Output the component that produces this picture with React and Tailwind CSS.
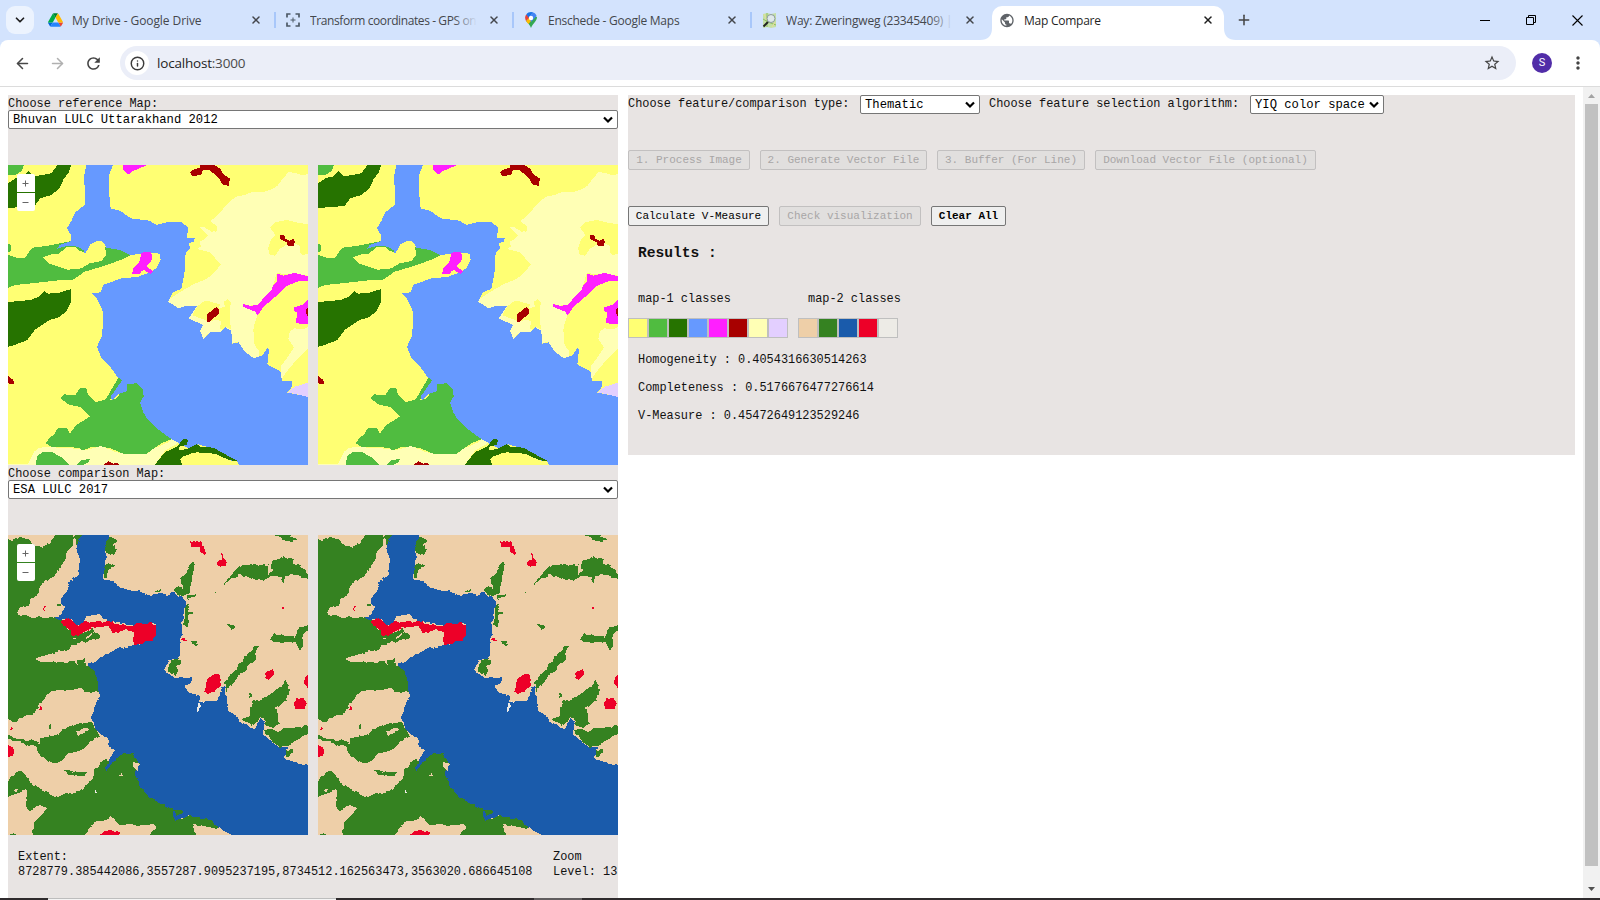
import React from "react";
import { ChevronDown, X, Plus, ArrowLeft, ArrowRight, Info } from "lucide-react";
import { MdRefresh, MdMoreVert, MdStarBorder, MdPublic } from "react-icons/md";

const MONO = "font-['Liberation_Mono','DejaVu_Sans_Mono',monospace]";

/* Thematic land-use raster, drawn on a 900 x 900 grid */
function BhuvanMap() {
  return (
    <svg viewBox="0 0 900 900" className="block h-[300px] w-[300px]" shapeRendering="crispEdges">
      <rect width="900" height="900" fill="#ffff73" />
      <g fill="#ffffb5">
        <path d="M900,27 L885,32 L865,25 L842,21 L825,40 L808,63 L790,73 L765,81 L735,80 L710,90 L683,95 L660,115 L640,138 L625,155 L607,168 L628,185 L623,200 L605,194 L590,185 L576,187 L600,210 L590,222 L576,230 L578,245 L568,252 L588,257 L605,262 L622,280 L638,299 L620,322 L596,342 L560,356 L530,373 L510,385 L484,402 L480,414 L512,430 L545,424 L566,424 L542,460 L585,480 L576,498 L584,525 L600,506 L640,500 L653,487 L665,495 L672,536 L690,530 L710,560 L738,580 L752,575 L756,557 L740,535 L736,495 L742,470 L749,449 L741,440 L706,425 L708,417 L725,422 L748,420 L790,380 L806,325 L860,327 L900,332 Z" />
        <path d="M0,898 L60,897 L78,860 L95,848 L120,846 L220,852 L235,855 L280,843 L320,860 L350,867 L415,868 L435,852 L480,832 L490,820 L530,824 L500,840 L470,858 L440,900 L0,900 Z" />
      </g>
      <g fill="#ffff73">
        <path d="M607,168 L628,185 L626,198 L610,200 L590,187 L576,183 L560,190 L600,210 L590,222 L576,230 L540,235 L540,180 Z" />
        <path d="M786,188 L800,172 L835,165 L870,173 L900,178 L900,265 L885,272 L874,262 L878,245 L855,232 L835,240 L815,252 L802,272 L785,270 L780,250 L788,226 L803,210 Z" />
        <path d="M568,424 L585,410 L600,408 L636,418 L633,430 L650,425 L648,410 L660,402 L668,412 L666,445 L668,492 L655,487 L645,495 L635,490 L640,470 L630,465 L600,468 L570,458 L553,450 Z" />
        <path d="M900,350 L870,349 L835,363 L800,395 L768,424 L749,449 L738,480 L737,530 L745,548 L755,557 L752,573 L765,570 L781,550 L781,595 L820,650 L852,665 L900,655 Z" />
      </g>
      <path fill="#ffffb5" d="M900,485 L888,493 L860,490 L845,500 L841,522 L858,547 L840,575 L820,602 L820,643 L832,625 L855,597 L880,570 L900,552 Z" />
      <g fill="#50bc40">
        <path d="M0,0 H48 L42,18 L20,31 L0,30 Z" />
        <path d="M0,235 L8,240 L10,257 L0,262 Z" />
        <path d="M0,270 L30,280 L50,280 L62,262 L75,248 L120,242 L170,232 L190,228 L210,240 L294,245 L335,255 L368,270 L340,284 L318,292 L290,302 L230,320 L195,344 L150,346 L90,353 L20,360 L0,369 Z" />
        <path d="M332,637 L346,642 L325,672 L306,705 L325,700 L360,655 L385,655 L415,672 L412,705 L430,750 L460,785 L492,822 L460,835 L430,855 L415,868 L345,866 L310,851 L280,844 L250,846 L225,856 L210,848 L130,845 L114,835 L124,818 L138,810 L150,788 L177,790 L186,805 L205,780 L245,755 L220,727 L180,718 L158,700 L170,688 L202,691 L215,670 L235,670 L240,690 L262,712 L293,703 Z" />
        <path d="M85,900 L86,875 L105,860 L130,860 L165,880 L183,900 Z" />
        <path d="M205,900 L222,884 L245,883 L240,893 L225,900 Z" />
      </g>
      <path fill="#6699ff" d="M235,0 H315 L303,30 L304,90 L308,130 L338,138 L368,160 L425,167 L445,180 L475,172 L520,172 L540,187 L537,220 L560,220 L558,230 L543,235 L546,252 L533,262 L530,320 L520,372 L494,382 L480,410 L512,430 L530,424 L566,424 L542,460 L585,480 L576,498 L587,523 L605,502 L640,500 L653,487 L670,498 L672,536 L692,532 L710,560 L738,580 L765,570 L778,548 L783,555 L778,598 L818,620 L822,648 L852,648 L852,665 L838,683 L900,695 V900 H690 L650,878 L620,852 L570,838 L540,850 L487,820 L450,793 L418,762 L405,740 L396,712 L407,695 L405,672 L385,655 L358,657 L358,678 L330,688 L312,707 L308,695 L343,645 L330,638 L310,610 L280,580 L267,545 L283,510 L285,440 L265,397 L252,385 L278,382 L285,360 L340,340 L388,336 L425,322 L445,310 L458,285 L456,266 L430,264 L365,270 L335,255 L295,248 L285,230 L270,228 L252,236 L246,250 L230,266 L226,255 L208,245 L180,242 L148,251 L155,240 L190,228 L190,212 L177,190 L190,168 L202,142 L230,120 L231,70 L227,40 Z" />
      <path fill="#ffff73" d="M105,277 L130,268 L150,268 L175,247 L200,245 L215,257 L233,264 L248,237 L270,227 L290,240 L295,270 L280,288 L245,295 L220,310 L180,314 L150,305 L125,296 Z" />
      <path fill="#e3cfff" d="M838,683 L860,665 L900,653 V696 L865,687 Z" />
      <g fill="#267300">
        <path d="M189,0 L182,23 L167,42 L155,70 L130,90 L97,100 L80,123 L0,129 V55 L25,38 L45,36 L62,17 L75,33 L100,31 L130,25 L145,5 L150,0 Z" />
        <path d="M0,411 L70,405 L95,393 L108,378 L120,386 L150,384 L190,372 L190,408 L175,440 L150,458 L125,465 L80,495 L58,525 L20,540 L0,545 Z" />
        <path d="M440,900 L470,862 L510,843 L525,822 L540,824 L536,840 L513,845 L515,857 L540,851 L565,838 L580,846 L618,848 L640,862 L690,888 L665,886 L620,866 L565,862 L525,874 L517,885 L523,900 Z" />
      </g>
      <path fill="#ffff73" d="M523,900 L517,882 L550,865 L610,865 L645,883 L690,890 L692,900 Z" />
      <g fill="#ff1fff">
        <path d="M345,0 H418 L390,12 L375,18 L360,29 L346,13 Z" />
        <path d="M400,264 L412,260 L430,262 L433,283 L417,303 L420,308 L435,318 L428,327 L408,315 L400,318 L396,326 L372,326 L377,308 L394,290 Z" />
        <path d="M900,348 L870,349 L836,363 L800,397 L768,424 L749,451 L741,440 L706,426 L706,417 L725,422 L749,421 L773,392 L790,377 L795,360 L806,352 L806,325 L825,332 L860,324 L900,334 Z" />
        <path d="M900,403 L885,419 L858,428 L858,438 L868,443 L863,473 L880,477 L900,477 Z" />
      </g>
      <g fill="#a80000">
        <path d="M576,0 H618 L637,11 L643,25 L666,41 L662,62 L645,60 L633,40 L616,25 L602,14 L584,16 L580,30 L552,33 L547,22 L560,11 L576,10 Z" />
        <path d="M817,211 L829,211 L833,222 L845,227 L856,221 L861,230 L856,244 L840,244 L835,231 L817,223 Z" />
        <path d="M625,426 L632,434 L632,446 L620,457 L603,472 L597,469 L598,447 Z" />
        <path d="M900,428 L894,432 V445 L900,455 Z M0,632 L16,645 L18,658 L0,655 Z" />
        <path d="M287,900 L301,888 L315,896 L330,894 L333,900 Z" />
      </g>
    </svg>
  );
}

const esaClasses = (
  <>
    <rect x="54" y="225" width="900" height="900" fill="#eecfa8" />
    <g fill="#358221">
      <path d="M54,240 L80,237 L95,232 L118,240 L130,255 L155,261 L180,250 L197,225 H250 L245,250 L250,258 L230,275 L225,305 L210,325 L190,350 L175,357 L150,375 L145,405 L120,418 L120,432 L90,443 L82,455 L90,468 L130,471 L190,475 L215,480 L235,520 L245,530 L240,560 L215,550 L185,515 L180,498 L205,490 L215,500 L255,515 L275,520 L310,505 L325,525 L310,535 L280,530 L250,535 L260,552 L245,568 L200,575 L135,597 L150,605 L200,608 L255,603 L265,622 L262,600 L285,598 L288,618 L310,620 L335,660 L335,697 L285,697 L275,685 L210,690 L185,693 L150,730 L130,765 L100,768 L80,785 L54,778 Z" />
      <path d="M252,228 H280 L275,245 L258,252 Z M355,228 L383,240 L372,250 L378,268 L372,285 L350,280 L347,250 Z M347,310 L374,320 L356,330 L355,353 L344,355 Z M852,225 H900 L923,238 L905,246 L880,240 Z" />
      <path d="M603,305 L614,303 L608,330 L609,360 L600,380 L598,405 L575,408 L548,392 L553,380 L580,383 L573,355 L590,338 Z M595,407 L620,402 L610,411 L595,420 Z M586,435 L597,437 L596,452 L609,458 L594,470 L593,497 L582,496 Z" />
      <path d="M700,373 L722,345 L748,317 L790,312 L830,317 L845,315 L850,302 L885,291 L914,297 L910,310 L935,320 L954,345 V357 L915,344 L885,348 L880,372 L870,350 L842,348 L825,362 L795,360 L765,347 L745,345 L720,357 L705,375 Z" />
      <path d="M712,497 L725,491 L737,500 L724,506 Z M606,542 L627,543 L615,552 L628,558 L612,558 Z M838,540 L852,523 L915,530 L929,505 L954,495 V512 L938,523 L940,560 L928,568 L915,545 L875,548 Z" />
      <path d="M812,557 L795,570 L798,600 L778,615 L762,635 L740,655 L718,680 L712,700 L705,665 L725,640 L748,615 L765,590 L785,570 L790,560 Z" />
      <path d="M888,657 L900,690 L890,720 L858,742 L864,765 L866,790 L850,803 L828,800 L820,772 L805,780 L785,795 L755,780 L780,765 L788,725 L830,710 L860,690 L880,675 Z M778,700 H785 V712 H778 Z" />
      <path d="M954,798 L905,803 L870,812 L820,810 L845,840 L870,861 L895,855 L920,840 L954,825 Z M885,870 H906 V880 L893,890 Z" />
      <path d="M54,825 L80,837 L130,840 L150,850 L150,835 L200,825 L235,800 L305,785 L330,830 L310,840 L275,870 L235,880 L210,908 L185,910 L150,890 L140,862 L90,850 L54,835 Z M176,795 H187 V804 H176 Z M217,927 L250,935 L293,938 L288,948 L235,945 Z" />
      <path d="M54,960 L80,935 L100,937 L120,965 L165,995 L200,1010 L265,993 L305,965 L315,930 L340,900 L365,905 L400,878 L430,882 L460,912 L460,950 L475,980 L500,1010 L565,1048 L555,1080 L600,1072 L640,1078 L665,1090 L685,1105 L670,1105 L640,1092 L610,1092 L620,1125 H478 L500,1105 L490,1095 L390,1095 L362,1068 L350,1080 L310,1088 L285,1125 H125 L130,1088 L160,1060 L175,1045 L145,1035 L120,1055 L108,1045 L110,990 L75,1003 L54,1014 Z" />
      <path d="M54,425 L65,430 L60,445 L72,455 L54,455 Z M200,431 H210 V438 H200 Z M495,395 L508,387 L514,394 Z M674,395 H678 V400 H674 Z M54,1125 L70,1120 L80,1125 Z" />
    </g>
    <g fill="#eecfa8">
      <path d="M258,815 L290,805 L298,813 L265,826 Z M388,945 L397,942 V950 H388 Z M68,990 L88,985 L80,993 Z M833,318 L843,315 L845,330 L835,345 Z" />
      <path d="M610,1095 L640,1110 L685,1103 L728,1115 V1125 H618 Z" />
    </g>
    <path fill="#1a5bab" d="M280,225 H357 L348,250 L347,300 L342,360 L365,362 L395,384 L445,393 L478,406 L515,398 L530,405 L548,397 L586,420 L583,450 L578,480 L574,530 L565,595 L538,600 L523,632 L555,655 L607,652 L605,670 L585,680 L595,697 L632,708 L625,730 L655,722 L680,725 L698,680 L708,683 L710,715 L716,757 L730,755 L745,780 L775,800 L795,803 L815,775 L825,790 L818,820 L840,840 L865,861 L890,860 L885,898 L920,907 L954,914 V1125 H726 L690,1105 L660,1090 L625,1075 L600,1068 L575,1075 L555,1083 L550,1048 L480,1015 L455,985 L437,950 L434,930 L448,912 L430,882 L400,880 L375,900 L350,930 L346,922 L360,895 L375,870 L358,860 L355,835 L335,825 L315,805 L314,785 L306,778 L312,745 L328,710 L325,690 L322,655 L310,630 L291,615 L320,605 L330,590 L385,567 L430,555 L455,549 L485,543 L497,520 L497,490 L465,490 L430,497 L380,488 L350,485 L325,465 L290,468 L275,495 L262,495 L245,477 L190,477 L220,455 L229,443 L215,430 L212,415 L228,400 L240,362 L267,345 L267,290 L260,275 L263,245 Z" />
    <path fill="#358221" d="M545,600 L560,596 L579,610 L558,620 L567,630 L556,648 L545,642 L532,630 Z M550,1050 H575 V1060 L560,1065 Z M600,1068 L625,1075 L665,1080 L685,1105 L640,1098 L600,1090 L560,1085 Z" />
    <path fill="#eecfa8" d="M270,515 L285,475 L325,465 L350,483 L320,485 L285,500 Z M275,540 L320,512 L380,512 L430,515 L430,552 L385,565 L340,575 L300,590 L240,600 L230,570 Z M430,905 L448,912 L442,930 L430,925 Z" />
    <path fill="#358221" d="M247,545 L268,528 L298,535 L308,520 L327,520 L325,538 L300,540 L285,548 L275,542 L250,558 Z" />
    <g fill="#ed0028">
      <path d="M213,482 L238,475 L255,490 L268,500 L278,487 L325,484 L367,487 L380,494 L430,500 L440,490 L480,488 L497,495 L497,525 L485,543 L455,549 L428,555 L432,516 L400,508 L385,518 L365,515 L355,498 L320,502 L290,510 L270,523 L245,528 L243,510 L215,495 Z" />
      <path d="M600,245 L635,242 L640,255 L649,283 L637,280 L625,262 L602,260 Z M694,275 L702,292 L710,297 L711,318 L685,318 L684,302 L695,300 Z M162,438 H168 V443 H165 V450 H168 V453 H162 Z M875,440 H882 V446 H875 Z M574,530 L590,540 L578,542 Z" />
      <path d="M678,640 L690,650 L697,678 L685,685 L670,695 L655,701 L645,695 L650,662 Z M852,627 L856,642 L835,660 L825,656 L830,637 Z M954,645 L946,650 L946,675 L954,690 Z M920,713 L938,713 L948,728 L940,747 L917,747 L911,730 Z M147,742 H156 V750 L148,756 L144,750 Z M63,800 H66 V804 H69 V808 H60 V804 H63 Z M54,855 L68,860 L74,876 L68,890 L54,892 Z M330,1125 L340,1116 L360,1110 L388,1120 V1125 Z" />
    </g>
    <path fill="#edebe6" d="M620,732 H627 V737 H631 V743 H627 V755 H621 Z M631,728 L644,723 L640,731 Z M314,990 H321 V999 H315 Z" />
  </>
);

/* Satellite-derived land cover raster; class borders are roughened by noise */
function EsaMap() {
  return (
    <svg viewBox="54 225 900 900" className="block h-[300px] w-[300px]" shapeRendering="crispEdges">
      <defs>
        <filter id="rough" filterUnits="userSpaceOnUse" x="54" y="225" width="900" height="900" colorInterpolationFilters="sRGB">
          <feTurbulence type="fractalNoise" baseFrequency="0.05" numOctaves="2" seed="4" />
          <feDisplacementMap in="SourceGraphic" scale="13" xChannelSelector="R" yChannelSelector="G" />
        </filter>
      </defs>
      {esaClasses}
      <g filter="url(#rough)">{esaClasses}</g>
    </svg>
  );
}

function Select({ label, className = "" }) {
  return (
    <div className={`flex items-center justify-between rounded-[2px] border border-[#767676] bg-white pl-1 pr-[3px] text-[12.2px] leading-none text-black ${className}`}>
      <span className="whitespace-pre pt-px">{label}</span>
      <svg width="12" height="8" viewBox="0 0 12 8" fill="none" stroke="#000" strokeWidth="2.2">
        <path d="M2,1.500 L6,5.500 L10,1.500" />
      </svg>
    </div>
  );
}

function ZoomControl() {
  return (
    <div className="absolute left-[9px] top-[9px] flex w-[18px] flex-col gap-px">
      <span className="flex h-[18px] items-center justify-center rounded-t-[2px] bg-white pr-px pt-px">
        <svg width="7" height="7" viewBox="0 0 7 7" stroke="#666"><path d="M0.5,3.5 H6.5 M3.5,0.5 V6.5" /></svg>
      </span>
      <span className="flex h-[18px] items-center justify-center rounded-b-[2px] bg-white pr-px pt-px">
        <svg width="7" height="7" viewBox="0 0 7 7" stroke="#666"><path d="M0.5,3.5 H6.5" /></svg>
      </span>
    </div>
  );
}

function MapSection({ title, value, Map }) {
  return (
    <section>
      <div className="h-[15px] leading-[18px]">{title}</div>
      <Select label={value} className="h-[19px] w-[610px]" />
      <div className="mt-9 flex gap-[10px]">
        <div className="relative h-[300px] w-[300px]">
          <Map />
          <ZoomControl />
        </div>
        <Map />
      </div>
    </section>
  );
}

function Button({ children, disabled, bold, className }) {
  const tone = disabled ? "border-[#c2c0c0] bg-[#e1dfde] text-[#a8a6a6]" : "border-[#767676] bg-[#efefef] text-black";
  return (
    <button className={`flex h-5 items-center justify-center whitespace-pre rounded-[2px] border pt-px text-[11px] leading-none ${bold ? "font-bold" : ""} ${tone} ${className}`}>
      {children}
    </button>
  );
}

function Swatches({ colors }) {
  return (
    <div className="flex">
      {colors.map((c) => (
        <span key={c} className="h-5 w-5 border border-[#bfbfbf]" style={{ backgroundColor: c }} />
      ))}
    </div>
  );
}

function DriveIcon() {
  return (
    <svg width="15" height="14" viewBox="0 0 87.3 78">
      <path fill="#0066da" d="m6.6 66.85 3.85 6.65c.8 1.4 1.95 2.5 3.3 3.3l13.75-23.8h-27.5c0 1.55.4 3.1 1.2 4.5z" />
      <path fill="#00ac47" d="m43.65 25-13.75-23.8c-1.35.8-2.5 1.9-3.3 3.3l-25.4 44a9.06 9.06 0 0 0 -1.2 4.5h27.5z" />
      <path fill="#ea4335" d="m73.55 76.8c1.35-.8 2.5-1.9 3.3-3.3l1.6-2.75 7.65-13.25c.8-1.4 1.2-2.95 1.2-4.5h-27.5l5.85 11.5z" />
      <path fill="#00832d" d="m43.65 25 13.75-23.8c-1.35-.8-2.9-1.2-4.5-1.2h-18.5c-1.6 0-3.15.45-4.5 1.2z" />
      <path fill="#2684fc" d="m59.8 53h-32.3l-13.75 23.8c1.35.8 2.9 1.2 4.5 1.2h50.8c1.6 0 3.15-.45 4.5-1.2z" />
      <path fill="#ffba00" d="m73.4 26.5-12.7-22c-.8-1.4-1.95-2.5-3.3-3.3l-13.75 23.8 16.15 28h27.45c0-1.55-.4-3.1-1.2-4.5z" />
    </svg>
  );
}

function TargetIcon() {
  return (
    <svg width="14" height="14" viewBox="0 0 14 14" fill="none" stroke="#4d5a66" strokeWidth="1.7">
      <path d="M1,4.500 V1 H4.500 M9.500,1 H13 V4.500 M13,9.500 V13 H9.500 M4.500,13 H1 V9.500" />
      <path d="M7,4.500 V9.500 M4.500,7 H9.500" strokeWidth="1" />
    </svg>
  );
}

function PinIcon() {
  return (
    <svg width="12" height="16" viewBox="0 0 12 16">
      <path fill="#34a853" d="M1,9 L9,4 L12,5 C12,9 8,11 6,16 C5,13 3,11 1,9 Z" />
      <path fill="#fbbc04" d="M1,9 L5,4 L8,7 L3.4,12 C2.5,11 1.5,10 1,9 Z" />
      <path fill="#ea4335" d="M1.3,2.4 L5,5 L1,9 C-0.4,6.600 0,4 1.3,2.4 Z" />
      <path fill="#1a73e8" d="M1.3,2.4 C2.5,0.8 4.2,0 6,0 L8,0.300 L4,6 Z" />
      <path fill="#4285f4" d="M7.500,0.2 C9.500,0.7 11,2 11.600,4 L6,10 L4.500,5.500 Z" />
      <circle cx="6" cy="6" r="2.2" fill="#fff" />
    </svg>
  );
}

function OsmIcon() {
  return (
    <svg width="15" height="15" viewBox="0 0 15 15">
      <path fill="#c5e0a6" d="M1,1 L5,0 L9,1 L14,0 V14 L9,15 L5,14 L1,15 Z" />
      <path stroke="#8fbf63" fill="none" d="M1,6 L6,9 L14,12 M5,0 V14" />
      <path stroke="#e7dd96" fill="none" d="M2,1 L5,7 M10,14 L13,9" />
      <path stroke="#222" strokeWidth="2" d="M6,9 L1.500,13.500" />
      <circle cx="9" cy="5.500" r="4" fill="#dfe8ea" stroke="#8c9aa0" />
    </svg>
  );
}

function Tab({ icon, title, active, width = "w-[238px]", fade, separator, tracking }) {
  return (
    <div className={`flex h-full shrink-0 items-center ${width} ${active ? "text-[#1f1f1f]" : "text-[#44474c]"}`}>
      <span className="flex w-4 shrink-0 justify-center">{icon}</span>
      <span className={`relative ml-[9px] mr-[5px] w-[167px] shrink-0 overflow-hidden whitespace-nowrap pt-px text-[12px] ${tracking}`}>
        {title}
        {fade && <span className="absolute inset-y-0 right-0 w-6 bg-gradient-to-r from-transparent to-[#d3e3fd]" />}
      </span>
      <X size={12} strokeWidth={3} className="ml-[6px] shrink-0" />
      {separator && <span className="ml-auto mr-[9px] h-4 w-[2px] bg-[#a8c7fa]" />}
    </div>
  );
}

function TabStrip() {
  return (
    <div className="flex h-10 bg-[#d3e3fd]">
      <div className="ml-[6px] mt-[6px] flex h-7 w-[28px] items-center justify-center rounded-[9px] bg-[#ecf3fe]">
        <ChevronDown size={14} strokeWidth={3} color="#1f1f1f" />
      </div>
      <div className="ml-[13px] flex h-10">
        <Tab icon={<DriveIcon />} title="My Drive - Google Drive" separator tracking="tracking-[-0.08px]" />
        <Tab icon={<TargetIcon />} title="Transform coordinates - GPS on" separator fade tracking="tracking-[-0.4px]" />
        <Tab icon={<PinIcon />} title="Enschede - Google Maps" separator tracking="tracking-[-0.25px]" />
        <Tab icon={<OsmIcon />} title="Way: Zweringweg (23345409) | O" width="w-[219px]" fade tracking="tracking-[-0.2px]" />
      </div>
      <div className="flex items-end">
        <svg width="12" height="12" viewBox="0 0 12 12"><path fill="#fff" d="M12,0 V12 H0 Q12,12 12,0 Z" /></svg>
        <div className="flex h-[34px] w-[232px] items-center rounded-t-[10px] bg-white pb-[6px] pl-[7px]">
          <Tab active icon={<MdPublic size={17} color="#5f6368" />} title="Map Compare" width="w-[225px]" tracking="tracking-[-0.25px]" />
        </div>
        <svg width="12" height="12" viewBox="0 0 12 12"><path fill="#fff" d="M0,0 V12 H12 Q0,12 0,0 Z" /></svg>
      </div>
      <div className="flex h-10 items-center">
        <Plus size={16} strokeWidth={2.3} color="#444" />
      </div>
      <div className="ml-auto flex h-10 items-center gap-9 pr-[17px]">
        <svg width="10" height="10" viewBox="0 0 10 10" stroke="#000"><path d="M0,5.500 H10" /></svg>
        <svg width="10" height="10" viewBox="0 0 10 10" fill="none" stroke="#000"><path d="M0.500,2.500 H7.500 V9.500 H0.500 Z M2.500,2.500 V0.500 H9.500 V7.500 H7.500" /></svg>
        <svg width="11" height="11" viewBox="0 0 11 11" stroke="#000" strokeWidth="1.1"><path d="M0.500,0.500 L10.500,10.500 M10.500,0.500 L0.500,10.500" /></svg>
      </div>
    </div>
  );
}

function Toolbar() {
  return (
    <div className="bg-[#d3e3fd]">
      <div className="flex h-[47px] items-center rounded-t-[8px] border-b border-[#dcdcdc] bg-white">
        <ArrowLeft size={17} strokeWidth={2.2} color="#474747" className="ml-[14px]" />
        <ArrowRight size={17} strokeWidth={2.2} color="#b0b0b0" className="ml-[18px]" />
        <MdRefresh size={19} color="#444" className="ml-[18px]" />
        <div className="ml-[17px] flex h-[34px] w-[1396px] items-center rounded-full bg-[#ebeef8] pl-[5px] pr-[15px]">
          <span className="flex h-6 w-6 items-center justify-center rounded-full bg-white">
            <Info size={15} strokeWidth={2.3} color="#3c3c3c" />
          </span>
          <span className="ml-2 text-[13.5px] tracking-[-0.2px] text-[#1f1f1f]">
            localhost<span className="text-[#4a4a4a]">:3000</span>
          </span>
          <MdStarBorder size={18} color="#444" className="ml-auto" />
        </div>
        <span className="ml-4 flex h-5 w-5 items-center justify-center rounded-full bg-[#512da8] font-['Roboto',sans-serif] text-[11px] text-white">S</span>
        <MdMoreVert size={20} color="#444" className="ml-4" />
      </div>
    </div>
  );
}

export default function App() {
  return (
    <div className="flex h-[900px] w-[1600px] flex-col overflow-hidden bg-white font-['Open_Sans','Noto_Sans',sans-serif]">
      <TabStrip />
      <Toolbar />
      <div className={`flex h-[811px] text-[11.92px] text-[#111] ${MONO}`}>
        <main className="flex flex-1 gap-[10px] pl-2 pt-2">
          <div className="h-[803px] w-[610px] overflow-hidden bg-[#e8e4e3]">
            <MapSection title="Choose reference Map:" value="Bhuvan LULC Uttarakhand 2012" Map={BhuvanMap} />
            <MapSection title="Choose comparison Map:" value="ESA LULC 2017" Map={EsaMap} />
            <div className="flex gap-5 pl-[10px] pt-[15px] leading-[15px]">
              <div className="w-[515px]">
                <div>Extent:</div>
                <div className="whitespace-pre">8728779.385442086,3557287.9095237195,8734512.162563473,3563020.686645108</div>
              </div>
              <div className="whitespace-pre">
                <div>Zoom</div>
                <div>Level: 13</div>
              </div>
            </div>
          </div>
          <div className="h-[360px] w-[947px] bg-[#e8e4e3]">
            <div className="flex h-5 items-start">
              <span className="w-[232px] leading-[18px]">Choose feature/comparison type:</span>
              <Select label="Thematic" className="h-[19px] w-[120px]" />
              <span className="ml-[9px] w-[261px] leading-[18px]">Choose feature selection algorithm:</span>
              <Select label="YIQ color space" className="h-[19px] w-[134px]" />
            </div>
            <div className="mt-[35px] flex gap-[10px]">
              <Button disabled className="w-[122px]">1. Process Image</Button>
              <Button disabled className="w-[167px]">2. Generate Vector File</Button>
              <Button disabled className="w-[148px]">3. Buffer (For Line)</Button>
              <Button disabled className="w-[221px]">Download Vector File (optional)</Button>
            </div>
            <div className="mt-9 flex gap-[10px]">
              <Button className="w-[141px]">Calculate V-Measure</Button>
              <Button disabled className="w-[142px]">Check visualization</Button>
              <Button bold className="w-[75px]">Clear All</Button>
            </div>
            <h3 className="ml-[10px] mt-[18px] text-[14.6px] font-bold leading-[18px]">Results :</h3>
            <div className="ml-[10px] mt-[30px] flex leading-[15px]">
              <span className="w-[170px]">map-1 classes</span>
              <span>map-2 classes</span>
            </div>
            <div className="mt-[11px] flex gap-[10px]">
              <Swatches colors={["#ffff73", "#50bc40", "#267300", "#6699ff", "#ff1fff", "#a80000", "#ffffb5", "#e3cfff"]} />
              <Swatches colors={["#eecfa8", "#358221", "#1a5bab", "#ed0028", "#edebe6"]} />
            </div>
            <div className="ml-[10px] mt-[15px] flex flex-col gap-[13px] leading-[15px]">
              <p>Homogeneity : 0.4054316630514263</p>
              <p>Completeness : 0.5176676477276614</p>
              <p>V-Measure : 0.45472649123529246</p>
            </div>
          </div>
        </main>
        <div className="flex w-[17px] flex-col items-center bg-[#f1f1f1]">
          <svg width="17" height="17" viewBox="0 0 17 17"><path fill="#a3a3a3" d="M5,11 L8.500,7 L12,11 Z" /></svg>
          <div className="h-[762px] w-[13px] bg-[#c1c1c1]" />
          <svg width="17" height="17" viewBox="0 0 17 17" className="mt-auto"><path fill="#505050" d="M5,6 L8.500,10 L12,6 Z" /></svg>
        </div>
      </div>
      <div className="flex h-[2px] bg-[#2f2b2d]">
        <div className="ml-12 w-[288px] border-t border-[#bdbdbd] bg-[#f4f4f4]" />
        <div className="ml-[198px] w-12 bg-[#615d5f]" />
      </div>
    </div>
  );
}
